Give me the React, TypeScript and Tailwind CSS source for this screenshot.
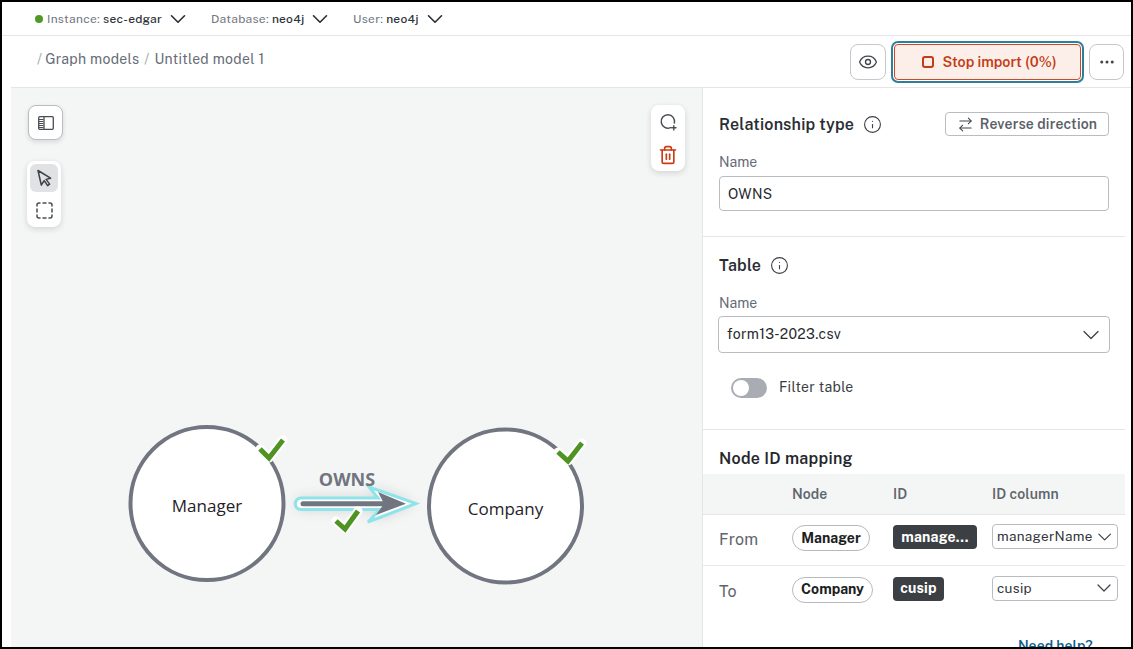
import React from "react";
import { ChevronDown, Eye, Ellipsis, Info, ArrowRightLeft, Trash2 } from "lucide-react";

const font = { fontFamily: '"Public Sans", Inter, "Liberation Sans", sans-serif' };

function Env({ label, value, dot, className }: { label: string; value: string; dot?: boolean; className: string }) {
  return (
    <div className={`flex items-center ${className}`}>
      {dot && <span className="mr-[4px] h-[8px] w-[8px] rounded-full bg-[#4f9a22]" />}
      <span className="text-[12px] tracking-[0.3px] text-[#6f757e]">{label}</span>
      <span className="ml-[3px] text-[12px] font-medium tracking-[0.2px] text-[#2f343a]">{value}</span>
      <ChevronDown size={26} strokeWidth={1.5} className="ml-[3px] text-[#2a2e33]" />
    </div>
  );
}

function Card({ className, children }: { className: string; children: React.ReactNode }) {
  return <div className={`rounded-[8px] bg-white shadow-[0_2px_6px_rgba(0,0,0,0.14)] ${className}`}>{children}</div>;
}

function Graph() {
  const check = (p: string) => (
    <g fill="none" strokeLinecap="round" strokeLinejoin="round">
      <polyline points={p} stroke="#ffffff" strokeWidth="9" />
      <polyline points={p} stroke="#4f9422" strokeWidth="5" strokeLinecap="butt" strokeLinejoin="miter" />
    </g>
  );
  const halo = "M301 498 L378 498 L369 487 L416 503.5 L368 522 L380 509.5 L301 509.5 A5.75 5.75 0 0 1 301 498 Z";
  return (
    <svg viewBox="11 88 691 559" className="absolute inset-0 h-full w-full">
      <defs>
        <filter id="glow" x="-30%" y="-60%" width="160%" height="220%">
          <feGaussianBlur stdDeviation="7" />
        </filter>
      </defs>
      <circle cx="207" cy="503.5" r="76.5" fill="#fff" stroke="#70757f" strokeWidth="4" />
      <circle cx="505.5" cy="506" r="76.5" fill="#fff" stroke="#70757f" strokeWidth="4" />
      <path d={halo} fill="#000" opacity="0.14" filter="url(#glow)" />
      <path d={halo} fill="#fff" stroke="#8fe4ea" strokeWidth="3" strokeLinejoin="miter" />
      <line x1="303" y1="503.7" x2="386" y2="503.7" stroke="#70757f" strokeWidth="5" strokeLinecap="round" />
      <polygon points="378,492 406,503.7 376,515 384,503.7" fill="#70757f" />
      <text x="347" y="486" textAnchor="middle" fontFamily="'Open Sans', sans-serif" fontWeight="700" fontSize="18" fill="#70757f">OWNS</text>
      <text x="207" y="512" textAnchor="middle" fontFamily="'Open Sans', sans-serif" fontSize="17" fill="#1f2328">Manager</text>
      <text x="505.5" y="515" textAnchor="middle" fontFamily="'Open Sans', sans-serif" fontSize="17" fill="#1f2328">Company</text>
      {check("260,449 269,458 283,440")}
      {check("558,452 568,461 582,443")}
      {check("336,521 345,529 358,511")}
    </svg>
  );
}

function Row({ label, node, id, col, nodeW, idW, border }: { label: string; node: string; id: string; col: string; nodeW: string; idW: string; border?: boolean }) {
  return (
    <div className={`flex h-[51px] items-center pl-[16px] ${border ? "border-b border-[#e8eaec]" : ""}`}>
      <span className="w-[73px] text-[16px] tracking-[0.2px] text-[#5f656d]">{label}</span>
      <div className="w-[101px] pb-[4px]">
        <span className={`flex h-[26px] items-center justify-center rounded-full border border-[#b5b9be] text-[14px] font-bold text-[#1b1e22] ${nodeW}`}>{node}</span>
      </div>
      <div className="w-[99px] pb-[6px]">
        <span className={`flex h-[24px] items-center justify-center rounded-[4px] bg-[#3c3f44] text-[14px] font-bold tracking-[0.2px] text-white ${idW}`}>{id}</span>
      </div>
      <div className="mb-[7px] flex h-[25px] w-[126px] items-center justify-between rounded-[4px] border border-[#b9bdc2] bg-white pl-[4px] pr-[1px]">
        <span className="text-[13.5px] tracking-[0.3px] text-[#31353a]">{col}</span>
        <ChevronDown size={24} strokeWidth={1.2} className="text-[#3c4046]" />
      </div>
    </div>
  );
}

export default function App() {
  return (
    <div style={font} className="h-[649px] w-[1133px] overflow-hidden border-x-2 border-y-2 border-black bg-white">
      <div className="flex h-[34px] items-center border-b border-[#e3e5e7] pl-[33px]">
        <Env dot label="Instance:" value="sec-edgar" className="w-[176px]" />
        <Env label="Database:" value="neo4j" className="w-[142px]" />
        <Env label="User:" value="neo4j" className="" />
      </div>
      <div className="ml-[9px] flex h-[52px] items-center border-b border-[#e3e5e7] pr-[7px]">
        <div className="mb-[5px] flex items-center pl-[26px] text-[14px] tracking-[0.3px] text-[#666c75]">
          <span className="mr-[3px] text-[#a4a8ae]">/</span>
          <span>Graph models</span>
          <span className="mx-[5px] text-[#a4a8ae]">/</span>
          <span>Untitled model 1</span>
        </div>
        <div className="ml-auto flex items-center">
          <button className="flex h-[36px] w-[36px] items-center justify-center rounded-[8px] border border-[#c4c7cb]">
            <Eye size={20} strokeWidth={1.6} className="text-[#41454b]" />
          </button>
          <div className="ml-[5px] rounded-[7px] border-2 border-[#2c7f9d] p-[1px]">
            <button className="flex h-[36px] w-[187px] items-center justify-center rounded-[4px] border border-[#cf4a22] bg-[#fcefea] pl-[3px] text-[14.25px] font-semibold text-[#c43c14]">
              <span className="mr-[9px] h-[12px] w-[12px] rounded-[3px] border-2 border-[#c43c14]" />
              Stop import (0%)
            </button>
          </div>
          <button className="ml-[5px] flex h-[36px] w-[35px] items-center justify-center rounded-[8px] border border-[#c4c7cb]">
            <Ellipsis size={18} strokeWidth={2} className="text-[#41454b]" />
          </button>
        </div>
      </div>
      <div className="ml-[9px] flex h-[559px]">
        <div className="relative flex w-[692px] justify-between border-r border-[#e3e5e7] bg-[#f4f6f6] pl-[17px] pr-[17px] pt-[17px]">
          <Graph />
          <div className="relative flex w-[35px] flex-col gap-[21px]">
            <div className="flex h-[35px] w-[35px] items-center justify-center rounded-[8px] border border-[#b9bcc0] bg-white shadow-[0_2px_5px_rgba(0,0,0,0.12)]">
              <svg width="16" height="14" viewBox="0 0 16 14" fill="none" stroke="#4a4e54" strokeWidth="1.3">
                <rect x="0.7" y="0.7" width="14.6" height="12.6" rx="1" />
                <path d="M6 .7V13.3" />
                <path d="M1 3.5H5.5M1 5.5H5.5M1 7.5H5.5M1 9.5H5.5M1 11.5H5.5" strokeWidth="1" />
              </svg>
            </div>
            <Card className="-ml-[1px] flex h-[66px] w-[34px] flex-col items-center pt-[3px]">
              <div className="flex h-[28px] w-[28px] items-center justify-center rounded-[6px] bg-[#e0e2e4]">
                <svg width="18" height="18" viewBox="0 0 18 18" fill="none" stroke="#3e4247" strokeWidth="1.5" strokeLinejoin="round">
                  <path d="M3 1.5L6.3 16L9.2 11.6L12.6 16.6L14.6 15.1L11.1 10.4L15.6 9.2Z" />
                </svg>
              </div>
              <svg width="17" height="17" viewBox="0 0 17 17" fill="none" stroke="#4a4e54" strokeWidth="1.5" strokeLinecap="round" className="mt-[10px]">
                <path d="M1 4V3A2 2 0 0 1 3 1H4M7 1H10M13 1H14A2 2 0 0 1 16 3V4M16 7V10M16 13V14A2 2 0 0 1 14 16H13M10 16H7M4 16H3A2 2 0 0 1 1 14V13M1 10V7" />
              </svg>
            </Card>
          </div>
          <Card className="relative flex h-[66px] w-[34px] flex-col items-center pt-[8px]">
            <svg width="18" height="18" viewBox="0 0 18 18" fill="none" stroke="#4a4e54" strokeWidth="1.5" strokeLinecap="round">
              <path d="M11.5 14.6A6.7 6.7 0 1 1 15.4 10" />
              <path d="M14.8 12.6V17M12.6 14.8H17" strokeWidth="1.4" />
            </svg>
            <Trash2 size={20} strokeWidth={2} className="mt-[14px] text-[#cb3d14]" />
          </Card>
        </div>
        <div className="w-[422px]">
          <div className="h-[149px] border-b border-[#e3e5e7] px-[16px] pt-[24px]">
            <div className="flex h-[24px] items-center">
              <span className="pt-[2px] text-[16px] font-semibold tracking-[0.2px] text-[#2a2e33]">Relationship type</span>
              <Info size={19} strokeWidth={1.4} className="ml-[9px] mt-[1px] text-[#3c4046]" />
              <button className="ml-auto flex h-[24px] w-[164px] items-center justify-center rounded-[4px] border border-[#b9bdc2] text-[14px] font-semibold tracking-[0.15px] text-[#5a5f67]">
                <ArrowRightLeft size={17} strokeWidth={1.5} className="mr-[6px] text-[#41454b]" />
                Reverse direction
              </button>
            </div>
            <div className="mt-[16px] text-[14px] leading-[20px] text-[#666c75]">Name</div>
            <div className="mt-[4px] flex h-[35px] items-center rounded-[4px] border border-[#b9bdc2] px-[8px] pt-[1px] text-[14px] tracking-[0.3px] text-[#26292e]">OWNS</div>
          </div>
          <div className="h-[193px] border-b border-[#e3e5e7] pt-[16px]">
            <div className="flex h-[24px] items-center px-[16px]">
              <span className="pt-[2px] text-[16px] font-semibold tracking-[0.2px] text-[#2a2e33]">Table</span>
              <Info size={19} strokeWidth={1.4} className="ml-[9px] mt-[1px] text-[#3c4046]" />
            </div>
            <div className="mt-[16px] px-[16px] text-[14px] leading-[20px] text-[#666c75]">Name</div>
            <div className="ml-[15px] mr-[15px] mt-[3px] flex h-[37px] items-center justify-between rounded-[4px] border border-[#b9bdc2] pl-[8px] pr-[4px] text-[14px] tracking-[0.3px] text-[#26292e]">
              form13-2023.csv
              <ChevronDown size={28} strokeWidth={1.1} className="text-[#3c4046]" />
            </div>
            <div className="ml-[28px] mt-[24px] flex items-center">
              <span className="flex h-[20px] w-[36px] items-center rounded-full bg-[#a9adb3] pl-[2px]">
                <span className="h-[16px] w-[16px] rounded-full bg-white" />
              </span>
              <span className="ml-[12px] text-[14px] tracking-[0.3px] text-[#3a3e44]">Filter table</span>
            </div>
          </div>
          <div className="flex h-[44px] items-end pb-[3px] pl-[16px] text-[16px] font-semibold tracking-[0.3px] text-[#24272c]">Node ID mapping</div>
          <div className="flex h-[41px] items-center border-b border-[#e3e5e7] bg-[#f4f6f6] pl-[89px] text-[14px] font-semibold tracking-[0.1px] text-[#5f656d]">
            <span className="w-[101px]">Node</span>
            <span className="w-[99px]">ID</span>
            <span>ID column</span>
          </div>
          <Row border label="From" node="Manager" id="manage..." col="managerName" nodeW="w-[78px]" idW="w-[84px]" />
          <Row label="To" node="Company" id="cusip" col="cusip" nodeW="w-[81px]" idW="w-[51px]" />
          <div className="mt-[19px] pl-[315px] text-[14px] font-semibold text-[#0f5f8f]">Need help?</div>
        </div>
      </div>
    </div>
  );
}
